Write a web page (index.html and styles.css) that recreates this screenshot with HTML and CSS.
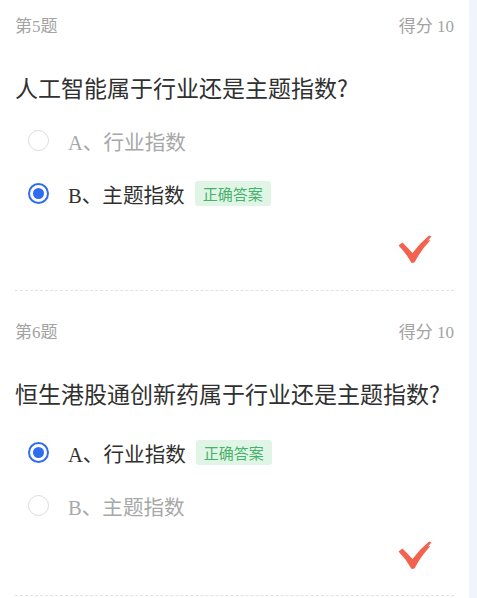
FILE: index.html
```html
<!DOCTYPE html>
<html lang="zh">
<head>
<meta charset="utf-8">
<link rel="stylesheet" href="styles.css">
</head>
<body>
<div class="page">
  <div class="card">
    <section class="section">
      <div class="head"><span>第5题</span><span>得分 10</span></div>
      <div class="question">人工智能属于行业还是主题指数?</div>
      <div class="options">
        <div class="option"><span class="radio"></span><span class="label">A、行业指数</span></div>
        <div class="option selected"><span class="radio"></span><span class="label">B、主题指数</span><span class="badge">正确答案</span></div>
      </div>
      <div class="result">
        <svg class="check" viewBox="0 0 34 28" width="34" height="28"><path d="M0.5 10.5 L4.5 7.5 Q9 12 14.5 18 Q22 8 31 0.5 L33.5 1.5 L30 5.5 L32.5 5 Q23 15 16.5 27.5 L13.5 28 Q8 18 0.5 10.5 Z" fill="#f2624f"/></svg>
      </div>
    </section>
    <section class="section section--b">
      <div class="head"><span>第6题</span><span>得分 10</span></div>
      <div class="question">恒生港股通创新药属于行业还是主题指数?</div>
      <div class="options">
        <div class="option selected"><span class="radio"></span><span class="label">A、行业指数</span><span class="badge">正确答案</span></div>
        <div class="option"><span class="radio"></span><span class="label">B、主题指数</span></div>
      </div>
      <div class="result">
        <svg class="check" viewBox="0 0 34 28" width="34" height="28"><path d="M0.5 10.5 L4.5 7.5 Q9 12 14.5 18 Q22 8 31 0.5 L33.5 1.5 L30 5.5 L32.5 5 Q23 15 16.5 27.5 L13.5 28 Q8 18 0.5 10.5 Z" fill="#f2624f"/></svg>
      </div>
    </section>
  </div>
</div>
</body>
</html>
```
FILE: styles.css
```css
html, body {
  margin: 0;
  padding: 0;
  background: #eff4fd;
}
.page {
  width: 477px;
  height: 598px;
  overflow: hidden;
}
.card {
  width: 469px;
  min-height: 598px;
  background: #ffffff;
  box-sizing: border-box;
  padding: 0 15px;
}
.section {
  padding-top: 16px;
  padding-bottom: 27px;
  border-bottom: 1px dashed #e2e2e2;
}
.section + .section {
  padding-top: 31px;
  padding-bottom: 26px;
}
.head {
  display: flex;
  justify-content: space-between;
  font-family: "Liberation Serif", "Noto Sans CJK SC", serif;
  font-size: 17px;
  line-height: 22px;
  color: #a3a3a3;
}
.question {
  margin-top: 34px;
  font-family: "Noto Sans CJK SC", sans-serif;
  font-size: 23px;
  line-height: 30px;
  color: #303030;
}
.options {
  margin-top: 12px;
  padding-left: 13px;
}
.section--b .options {
  margin-top: 18px;
}
.option {
  height: 53px;
  display: flex;
  align-items: center;
}
.radio {
  width: 21px;
  height: 21px;
  box-sizing: border-box;
  border: 1.5px solid #dcdcdc;
  border-radius: 50%;
  display: flex;
  align-items: center;
  justify-content: center;
  flex: none;
}
.option.selected .radio {
  border: 2px solid #2f6cf2;
}
.option.selected .radio::after {
  content: "";
  width: 11px;
  height: 11px;
  border-radius: 50%;
  background: #2f6cf2;
}
.label {
  margin-left: 19px;
  font-family: "Liberation Serif", "Noto Sans CJK SC", serif;
  font-size: 20.6px;
  color: #a8a8a8;
}
.option.selected .label {
  color: #303030;
}
.badge {
  margin-left: 10px;
  height: 25px;
  padding: 0 8px;
  display: flex;
  align-items: center;
  background: #e1f5e7;
  color: #45b269;
  font-family: "Noto Sans CJK SC", sans-serif;
  font-size: 15px;
  border-radius: 3px;
}
.result {
  margin-top: 15px;
  display: flex;
  justify-content: flex-end;
  padding-right: 22px;
}
.section--b .result {
  margin-top: 9px;
}
.check {
  display: block;
}
```
